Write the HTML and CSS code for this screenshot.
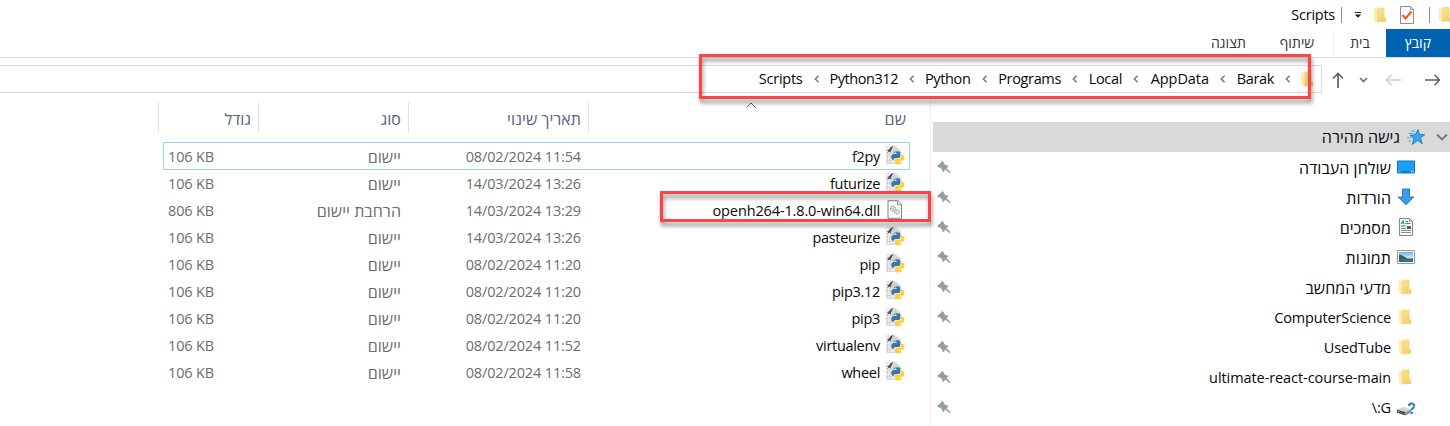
FILE: index.html
```html
<!DOCTYPE html>
<html lang="he" dir="rtl">
<head>
<meta charset="utf-8">
<title>Scripts</title>
<link rel="stylesheet" href="styles.css">
</head>
<body>
<svg class="defs" width="0" height="0" aria-hidden="true">
  <defs>
    <linearGradient id="gold" x1="0" x2="1" y1="0" y2="1"><stop offset="0" stop-color="#fce49a"/><stop offset="1" stop-color="#f2cd66"/></linearGradient>
    <linearGradient id="sky" x1="0" x2="0" y1="0" y2="1"><stop offset="0" stop-color="#6eb0ea"/><stop offset="0.6" stop-color="#d8ecf6"/></linearGradient>
    <symbol id="folder" viewBox="0 0 13 16">
      <path d="M3 .5h7.500V10.500H12V15H3z" fill="url(#gold)"/>
      <path d="M0 .8 4 2.400V16L0 13.800z" fill="#fdeaac"/>
      <path d="M4 2.400V16" stroke="#e9c45c" stroke-width=".6"/>
    </symbol>
    <symbol id="pyfile" viewBox="0 0 20 20">
      <path d="M.5.5h11l5 5V19H.5z" fill="#ececec"/>
      <path d="M9 1 15.500 6v3H5z" fill="#d0d2d3"/>
      <path d="M2.500 7v11M5 9v9.500M1.500 11h6M1.500 15.500h7M2 18.300h9" stroke="#c0c0c0" stroke-width=".8" stroke-dasharray="1.300 .8"/>
      <path d="M8.500.8 5.600 2.200 4.200 4.200 1.500 5.600l2 .2L2 8.200l2.600-1.700.8 1.300.7-2.400z" fill="#4a4e51"/>
      <path d="M8.700 8.200q0-1.900 3.400-1.900t3.200 1.900v3q0 1.700-1.800 1.700h-3q-1.600 0-1.700 1.900H7.600q-1.600-.8-1.300-3.400.2-2.300 2.200-2.500h3.700v-.7z" fill="#3a75a8"/>
      <path d="M16 9.700h1.600q1.900.6 1.900 3 0 2.500-2 3h-3.900v.7h2.600v1.500q-.5 1.600-3.200 1.600t-3.200-1.700v-2.500q0-1.500 1.700-1.600h3q1.500-.1 1.500-1.700z" fill="#ffd03c"/>
      <circle cx="10.200" cy="7.900" r=".65" fill="#fff"/>
    </symbol>
    <symbol id="dll" viewBox="0 0 16 19">
      <path d="M1 .7h9.700l3.800 3.800v13.800H1z" fill="#fafafa" stroke="#858585"/>
      <path d="M10.500.7v4h4" fill="#e8e8e8" stroke="#858585" stroke-width=".8"/>
      <circle cx="6" cy="8.800" r="2.300" fill="none" stroke="#8a9299" stroke-width="1.300" stroke-dasharray="1 .6"/>
      <circle cx="6" cy="8.800" r=".8" fill="#8a9299"/>
      <circle cx="10" cy="11.800" r="2.200" fill="none" stroke="#6c9fc5" stroke-width="1.300" stroke-dasharray="1 .6"/>
      <circle cx="10" cy="11.800" r=".8" fill="#9ac0dc"/>
    </symbol>
    <symbol id="pin" viewBox="0 0 14 14">
      <path d="M4.800.6 7 2.600 6.900 3.600 9.200 5.500 11 5.300 11.300 6.300 9.600 8.300 13.500 12.200 12.500 13.300 8.500 9.600 6.400 12 5.300 11.600 5.200 9.800 3.200 7.400 1.500 7.500.3 5.800 4.700 2z" fill="#929ea6"/>
    </symbol>
    <symbol id="crumb" viewBox="0 0 6 8"><path d="M4.600.7 1.300 4l3.300 3.300" fill="none" stroke="#777" stroke-width="1.500"/></symbol>
  </defs>
</svg>

<header class="title-bar">
  <svg class="edge-folder" width="13" height="17"><use href="#folder"/></svg>
  <span class="bar edge"></span>
  <svg class="check" width="14" height="18" viewBox="0 0 14 18"><path d="M.5.5h10l3 3v14H.5z" fill="#f8f8f8" stroke="#8c8c8c"/><path d="M10.500.5v3h3" fill="#ddd" stroke="#8c8c8c" stroke-width=".7"/><path d="m2.500 9 3 3.500 6-7" fill="none" stroke="#ef5a1c" stroke-width="2"/></svg>
  <svg class="quick-folder" width="13" height="16"><use href="#folder"/></svg>
  <svg class="more" width="8" height="6" viewBox="0 0 8 6"><path d="M1 .5h6" stroke="#222"/><path d="M.8 2.500h6.400L4 5.700z" fill="#222"/></svg>
  <span class="bar"></span>
  <span class="window-name">Scripts</span>
</header>

<nav class="tabs">
  <span class="tab file">קובץ</span>
  <span class="tab active">בית</span>
  <span class="tab share">שיתוף</span>
  <span class="tab view">תצוגה</span>
</nav>

<div class="address-row">
  <svg class="arrow-fwd" width="16" height="12" viewBox="0 0 16 12"><path d="M0 6h14.500M9.500 1l5 5-5 5" fill="none" stroke="#606060" stroke-width="1.500"/></svg>
  <svg class="arrow-back" width="16" height="12" viewBox="0 0 16 12"><path d="M16 6H1.500M6.500 1l-5 5 5 5" fill="none" stroke="#d0d0d0" stroke-width="1.500"/></svg>
  <svg class="recent" width="9" height="6" viewBox="0 0 9 6"><path d="m1 1 3.500 3.500L8 1" fill="none" stroke="#707070" stroke-width="1.700"/></svg>
  <svg class="arrow-up" width="12" height="16" viewBox="0 0 12 16"><path d="M6 16V1.500M1 6.500l5-5 5 5" fill="none" stroke="#606060" stroke-width="1.700"/></svg>
  <div class="address">
    <svg class="address-folder" width="13" height="16"><use href="#folder"/></svg>
    <svg class="sep" width="6" height="8"><use href="#crumb"/></svg><span class="c-barak">Barak</span>
    <svg class="sep" width="6" height="8"><use href="#crumb"/></svg><span class="c-appdata">AppData</span>
    <svg class="sep" width="6" height="8"><use href="#crumb"/></svg><span class="c-local">Local</span>
    <svg class="sep" width="6" height="8"><use href="#crumb"/></svg><span class="c-programs">Programs</span>
    <svg class="sep" width="6" height="8"><use href="#crumb"/></svg><span class="c-python">Python</span>
    <svg class="sep" width="6" height="8"><use href="#crumb"/></svg><span class="c-python312">Python312</span>
    <svg class="sep" width="6" height="8"><use href="#crumb"/></svg><span class="c-scripts">Scripts</span>
  </div>
  <div class="mark mark-path"></div>
</div>

<main class="body">
  <aside class="sidebar">
    <div class="quick">
      <svg class="expand" width="12" height="8" viewBox="0 0 12 8"><path d="m1 1.500 5 5 5-5" fill="none" stroke="#777" stroke-width="1.900"/></svg>
      <svg class="star" width="18" height="16" viewBox="0 0 18 16"><path d="m11 .5 1.700 5 5.100.2-4.200 3.100 1.700 5.900-4.700-3.200-5.400 4 1.700-6L3 6.500l5.300-.9z" fill="#35a4ee" stroke="#1477b8" stroke-width=".8"/><path d="M4 2h4M1.500 4.500h5M0 9h4M1 12h3" stroke="#5fa7d6"/></svg>
      <span class="he">גישה מהירה</span>
    </div>
    <div class="place"><svg width="20" height="20" viewBox="0 0 20 20"><path d="M1.500 4h17v12h-17z" fill="#18a0fb" stroke="#0874c4"/><path d="M18 4.500v8L8 15h10z" fill="#4bb6ff" opacity=".5"/><path d="M3 14.800h12" stroke="#0a69b0"/><path d="M2.500 14.800h2M15 14.800h2.500" stroke="#fff" stroke-dasharray="1 .7"/></svg><span class="he">שולחן העבודה</span><svg class="pin" width="14" height="14"><use href="#pin"/></svg></div>
    <div class="place"><svg width="20" height="20" viewBox="0 0 20 20"><path d="M6.500 2h7v8h4.300L10 17.800 2.200 10h4.300z" fill="#3c9cea" stroke="#2275bd" stroke-width=".9"/></svg><span class="he">הורדות</span><svg class="pin" width="14" height="14"><use href="#pin"/></svg></div>
    <div class="place"><svg width="20" height="20" viewBox="0 0 20 20"><path d="M3.500 1.500h10l3 3v14h-13z" fill="#fbfbfb" stroke="#868686"/><path d="M13.500 1.500v3h3" fill="none" stroke="#868686" stroke-width=".7"/><path d="m5 7 2-3.500L8 7M5.500 6h2M9.500 4.500H12M9.500 6.500h5M5 9h5" stroke="#2681bd" fill="none"/><path d="M5 11.500h5M5 13.500h10M5 15.500h10" stroke="#8c8c8c"/><path d="M11 9h4v3h-4z" fill="#38637f"/></svg><span class="he">מסמכים</span><svg class="pin" width="14" height="14"><use href="#pin"/></svg></div>
    <div class="place"><svg width="20" height="20" viewBox="0 0 20 20"><path d="M1.500 3.500h17v13h-17z" fill="#fff" stroke="#989898"/><path d="M3 5h14v10H3z" fill="url(#sky)"/><path d="M3 7.500q3 0 6 2.500t8 1v1.500H3z" fill="#37664f"/><path d="M3 12h14v3H3z" fill="#2d6e9c"/></svg><span class="he">תמונות</span><svg class="pin" width="14" height="14"><use href="#pin"/></svg></div>
    <div class="place"><svg class="dir" width="13" height="16"><use href="#folder"/></svg><span class="he">מדעי המחשב</span><svg class="pin" width="14" height="14"><use href="#pin"/></svg></div>
    <div class="place"><svg class="dir" width="13" height="16"><use href="#folder"/></svg><span>ComputerScience</span><svg class="pin" width="14" height="14"><use href="#pin"/></svg></div>
    <div class="place"><svg class="dir" width="13" height="16"><use href="#folder"/></svg><span>UsedTube</span><svg class="pin" width="14" height="14"><use href="#pin"/></svg></div>
    <div class="place"><svg class="dir" width="13" height="16"><use href="#folder"/></svg><span class="wide">ultimate-react-course-main</span><svg class="pin" width="14" height="14"><use href="#pin"/></svg></div>
    <div class="place"><svg width="20" height="20" viewBox="0 0 20 20"><path d="m1 12.500 7-2.500 6 2-4.500 3z" fill="#d0d3d4"/><path d="m1 12.500 8.500 2.500v3.500L1 15.800z" fill="#4e5355"/><path d="m9.500 15 6-3v3.200l-6 3.300z" fill="#909496"/><path d="M2 14.500h1.500" stroke="#59e06b"/><path d="M12.800 9q.3-2.500 2.900-2.400 2.800.2 2.500 2.600-.2 1.300-1.500 2.100-1 .8-1 2M15.700 15v2.200" fill="none" stroke="#237fc0" stroke-width="2"/></svg><span>G:\</span><svg class="pin" width="14" height="14"><use href="#pin"/></svg></div>
  </aside>

  <section class="files">
    <div class="columns">
      <span class="col col-name">שם<svg class="sort" width="10" height="6" viewBox="0 0 10 6"><path d="M.7 5.300 5 1l4.300 4.300" fill="none" stroke="#666"/></svg></span>
      <span class="col col-date">תאריך שינוי</span>
      <span class="col col-type">סוג</span>
      <span class="col col-size">גודל</span>
    </div>
    <div class="rows">
      <div class="row focused"><svg width="20" height="20"><use href="#pyfile"/></svg><span class="name">f2py</span><span class="date">08/02/2024 11:54</span><span class="he">יישום</span><span class="size">106 KB</span></div>
      <div class="row"><svg width="20" height="20"><use href="#pyfile"/></svg><span class="name">futurize</span><span class="date">14/03/2024 13:26</span><span class="he">יישום</span><span class="size">106 KB</span></div>
      <div class="row"><svg class="lib" width="16" height="19"><use href="#dll"/></svg><span class="name long">openh264-1.8.0-win64.dll</span><span class="date">14/03/2024 13:29</span><span class="he">הרחבת יישום</span><span class="size">806 KB</span><div class="mark mark-file"></div></div>
      <div class="row"><svg width="20" height="20"><use href="#pyfile"/></svg><span class="name">pasteurize</span><span class="date">14/03/2024 13:26</span><span class="he">יישום</span><span class="size">106 KB</span></div>
      <div class="row"><svg width="20" height="20"><use href="#pyfile"/></svg><span class="name">pip</span><span class="date">08/02/2024 11:20</span><span class="he">יישום</span><span class="size">106 KB</span></div>
      <div class="row"><svg width="20" height="20"><use href="#pyfile"/></svg><span class="name">pip3.12</span><span class="date">08/02/2024 11:20</span><span class="he">יישום</span><span class="size">106 KB</span></div>
      <div class="row"><svg width="20" height="20"><use href="#pyfile"/></svg><span class="name">pip3</span><span class="date">08/02/2024 11:20</span><span class="he">יישום</span><span class="size">106 KB</span></div>
      <div class="row"><svg width="20" height="20"><use href="#pyfile"/></svg><span class="name">virtualenv</span><span class="date">08/02/2024 11:52</span><span class="he">יישום</span><span class="size">106 KB</span></div>
      <div class="row"><svg width="20" height="20"><use href="#pyfile"/></svg><span class="name">wheel</span><span class="date">08/02/2024 11:58</span><span class="he">יישום</span><span class="size">106 KB</span></div>
    </div>
  </section>
</main>
</body>
</html>
```

FILE: styles.css
```css
* { box-sizing: border-box; }
html, body { margin: 0; height: 426px; overflow: hidden; }
body {
  background: #fff;
  color: #080808;
  font: 14.5px/20px "Open Sans", "Noto Sans", "DejaVu Sans", sans-serif;
  letter-spacing: -0.35px;
  white-space: nowrap;
}
svg { display: block; flex: none; }
.defs { position: absolute; }
.he { font-size: 16px; letter-spacing: 0.05px; }

/* Title bar */
.title-bar { display: flex; align-items: center; height: 29px; }
.edge-folder { margin-right: -2px; }
.bar { width: 1px; height: 16px; background: #8a8a8a; }
.bar.edge { margin: 0 9px 0 15px; }
.check { margin-left: 13px; }
.more { margin: 0 12px; }
.window-name { margin-right: 6px; letter-spacing: -0.25px; }

/* Ribbon tabs */
.tabs { display: flex; height: 29px; border-bottom: 1px solid #dcdddf; font-size: 14px; letter-spacing: 0.05px; color: #333; }
.tab { display: flex; align-items: center; justify-content: center; height: 28px; }
.file { width: 64px; padding-left: 0; background: #0063b1; color: #fff; }
.active { width: 53px; border-left: 1px solid #f1f2f4; background: #fff; }
.share { width: 72px; }
.view { width: 65px; }

/* Address row */
.address-row { position: relative; display: flex; align-items: center; height: 42px; }
.arrow-fwd { margin: 2px 9px 0 0; }
.arrow-back { margin: 2px 24px 0 0; }
.recent { margin: 2px 17px 0 0; }
.arrow-up { margin: 2px 15px 0 0; }
.address {
  display: flex; align-items: center; flex: 1; height: 28px;
  margin-right: 10px; padding-right: 7px;
  border: 1px solid #d9d9d9; border-left: 0;
}
.address-folder { margin-left: 10px; }
.sep { margin: 0 11px; }
.address-folder + .sep { margin-right: 0; }
.c-barak { width: 37px; }
.c-appdata { width: 59px; letter-spacing: -0.05px; }
.c-local { width: 33px; }
.c-programs { width: 62.5px; }
.c-python { width: 44.5px; }
.c-python312 { width: 67.5px; letter-spacing: -0.45px; }
.c-scripts { width: 44px; letter-spacing: -0.25px; }

/* Red highlight frames lying over the window */
.mark { position: absolute; border: 3px solid #fc4444; filter: drop-shadow(1px 4px 2px rgba(0, 0, 0, .45)); z-index: 2; }
.mark-path { left: 699px; top: -4px; width: 612px; height: 45px; }
.mark-file { right: -21px; top: -6px; width: 271px; height: 31px; }

/* Body */
.body { display: flex; height: 326px; }
.sidebar { width: 520px; padding: 22px 0 0 2px; border-left: 1px solid #f0f0f0; }
.quick { display: flex; align-items: center; height: 30px; background: #d9d9d9; }
.expand { margin-right: 2px; }
.star { margin: 0 11px 0 7px; }
.place { display: flex; align-items: center; height: 30px; padding: 0 34px 0 4px; letter-spacing: -0.15px; }
.place span { margin: 0 5px 0 auto; padding-top: 1px; }
.place .wide { letter-spacing: -0.08px; }
.place .dir { margin: 0 4px 0 3px; }

.files { flex: 1; }
.columns { display: flex; height: 31px; margin-top: 2px; color: #53647a; font-size: 16px; letter-spacing: 0.05px; line-height: 34px; }
.col { padding-right: 7px; border-left: 1px solid #e3e3e3; }
.col-name { position: relative; width: 342px; padding-right: 24px; }
.col-date { width: 180px; }
.col-type { width: 150px; }
.col-size { width: 100px; }
.sort { position: absolute; left: 157px; top: 0; }
.rows { padding-top: 10px; margin: 0 20px 0 0; }
.row {
  position: relative;
  display: grid; grid-template-columns: 20px 304px 180px 187px 51px;
  align-items: center; width: 747px; height: 27px; padding-right: 5px;
  color: #6d6d6d;
}
.focused::before { content: ""; position: absolute; inset: -1px 0 0 0; border: 1px solid #99cffa; }
.row svg { margin-bottom: 3px; }
.row .name { padding-right: 5px; color: #080808; letter-spacing: -0.3px; }
.row .long { letter-spacing: -0.13px; }
.name, .date, .size { direction: ltr; text-align: right; letter-spacing: -0.15px; }
.row .lib { margin-right: 2px; }
```
